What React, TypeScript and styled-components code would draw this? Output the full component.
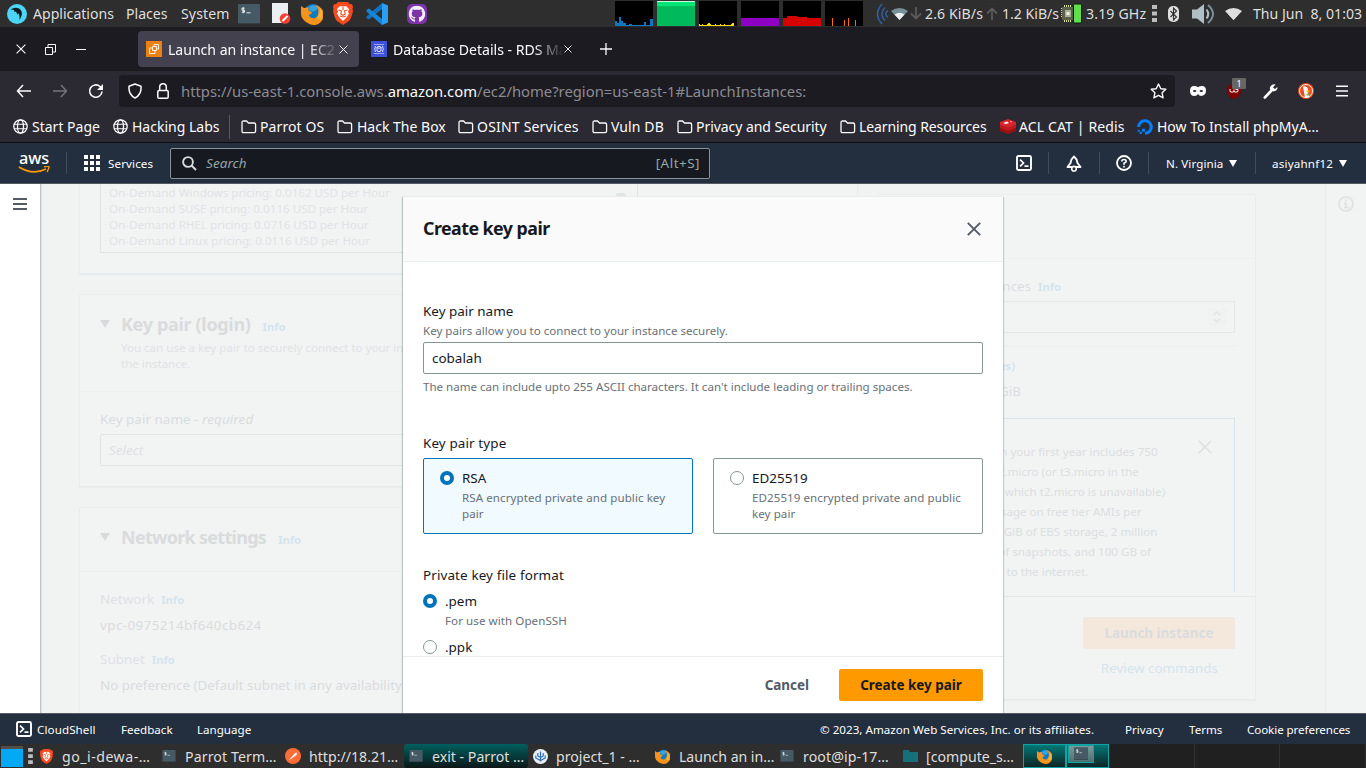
import React from 'react';
import styled, { createGlobalStyle, css } from 'styled-components';
import { FaGithub, FaDigitalOcean } from 'react-icons/fa6';

const Global = createGlobalStyle`
  * { box-sizing: border-box; }
  body { margin: 0; overflow: hidden; font-family: 'Noto Sans', 'Open Sans', sans-serif; }
  svg { display: block; flex: none; }
`;

const Screen = styled.div`
  width: 1366px;
  height: 768px;
  display: flex;
  flex-direction: column;
  overflow: hidden;
  background: #1c1b22;
`;

const Slot = styled.div<{ $w: number; $ls?: number }>`
  flex: none;
  width: ${(p) => p.$w}px;
  height: 100%;
  display: flex;
  align-items: center;
  white-space: pre;
  letter-spacing: ${(p) => p.$ls ?? 0}px;
`;

/* ---------- desktop panel ---------- */
const Panel = styled.div`
  flex: none;
  height: 27px;
  padding: 0 0 0 7px;
  display: flex;
  align-items: center;
  background: #2e2e2e;
  color: #dfdfdf;
  font-size: 14.1px;
  line-height: 27px;
`;
const Graph = styled.svg`
  width: 38px;
  height: 25px;
  background: #000;
`;

/* ---------- browser ---------- */
const TabStrip = styled.div`
  flex: none;
  height: 44px;
  padding: 0 0 0 16px;
  display: flex;
  align-items: center;
  background: #1c1b22;
  color: #fbfbfe;
  font-size: 14.1px;
`;
const Tab = styled.div<{ $active?: boolean; $w: number }>`
  flex: none;
  width: ${(p) => p.$w}px;
  height: 36px;
  padding-left: 8px;
  display: flex;
  align-items: center;
  gap: 6px;
  border-radius: 4px;
  background: ${(p) => (p.$active ? '#42414d' : 'transparent')};
`;
const TabTitle = styled.span<{ $w: number }>`
  width: ${(p) => p.$w}px;
  margin-right: -6px;
  overflow: hidden;
  white-space: nowrap;
  letter-spacing: -0.03px;
  mask-image: linear-gradient(to right, #000 calc(100% - 30px), transparent);
`;
const Toolbar = styled.div`
  flex: none;
  height: 40px;
  padding: 0 0 0 16px;
  display: flex;
  align-items: center;
  background: #2b2a33;
`;
const UrlBar = styled.div`
  flex: none;
  width: 1056px;
  height: 32px;
  padding-left: 9px;
  margin-right: 15px;
  display: flex;
  align-items: center;
  border-radius: 4px;
  background: #1c1b22;
  color: #8c8b93;
  font-size: 14.8px;
  b { font-weight: 400; color: #fbfbfe; }
`;
const Bookmarks = styled.div`
  flex: none;
  height: 32px;
  padding: 0 0 0 13px;
  display: flex;
  align-items: center;
  background: #2b2a33;
  border-bottom: 1px solid #0c0c0d;
  color: #fbfbfe;
  font-size: 14px;
`;
const BookmarkDivider = styled.i`
  width: 1px;
  height: 24px;
  background: #5b5b66;
`;
const Extension = styled.div`
  position: relative;
  display: flex;
`;
const Badge = styled.span`
  position: absolute;
  left: 5px;
  top: -6px;
  width: 14px;
  height: 11px;
  background: #666;
  border-radius: 1px;
  color: #fff;
  font-size: 9px;
  line-height: 11px;
  text-align: center;
`;

/* ---------- aws console ---------- */
const Nav = styled.header`
  flex: none;
  height: 41px;
  padding-left: 18px;
  display: flex;
  align-items: center;
  background: #232f3e;
  border-bottom: 1px solid #545b64;
  color: #fff;
  font-size: 11.6px;
`;
const NavDivider = styled.i`
  width: 1px;
  height: 22px;
  background: #414d5c;
`;
const Logo = styled.div`
  width: 32px;
  height: 26px;
  display: flex;
  flex-direction: column;
  align-items: center;
  font-size: 16.3px;
  font-weight: 500;
  line-height: 16px;
  letter-spacing: -0.2px;
`;
const SearchBox = styled.div`
  width: 540px;
  height: 31px;
  padding: 0 10px 0 11px;
  display: flex;
  align-items: center;
  gap: 9px;
  border: 1px solid #879596;
  border-radius: 2px;
  background: #161920;
  color: #95a5a6;
  font-size: 13.45px;
  em { flex: 1; letter-spacing: 0.1px; }
`;
const Shortcut = styled.span`
  margin-right: -1px;
  letter-spacing: 0.5px;
`;

const Page = styled.div`
  position: relative;
  flex: none;
  height: 529px;
  display: flex;
  overflow: hidden;
  background: #f1f3f3;
`;
const SideRail = styled.nav`
  flex: none;
  width: 41px;
  padding: 14px 0 0 13px;
  background: #fff;
  border-right: 1px solid #bcc3c6;
  box-shadow: 1px 0 1px #dfe3e4;
`;
const Content = styled.main`
  flex: none;
  width: 1284px;
  height: 529px;
  padding-left: 38px;
  display: flex;
  gap: 20px;
`;
const InfoRail = styled.aside`
  flex: 1;
  padding: 12px 0 0 12px;
  border-left: 1px solid #eaeded;
  background: #f2f4f4;
`;
const LeftColumn = styled.div`
  flex: none;
  width: 779px;
  display: flex;
  flex-direction: column;
  gap: 20px;
`;
const Card = styled.section<{ $h: number }>`
  flex: none;
  height: ${(p) => p.$h}px;
  background: #f2f4f4;
  border: 1px solid #eceeee;
  border-bottom-color: #e7eaea;
  box-shadow: 0 1px 1px #e9ecec;
`;
const PricingCard = styled(Card)`
  padding-left: 20px;
  border-top: 0;
`;
const Pricing = styled.div`
  width: 538px;
  height: 69px;
  display: flex;
  justify-content: space-between;
  padding: 1px 11px 0 8px;
  border: 1px solid #e1e4e5;
  border-top: 0;
  color: #e0e3e5;
  font-size: 11.62px;
  line-height: 16px;
  svg { margin-top: 8px; }
`;
const CardHead = styled.div<{ $h: number }>`
  height: ${(p) => p.$h}px;
  padding: 17px 20px 0;
  border-bottom: 1px solid #edf0f0;
`;
const CardTitle = styled.h2<{ $ls: number }>`
  margin: 0;
  display: flex;
  align-items: center;
  height: 24px;
  color: #d9dbdd;
  font-size: 18px;
  font-weight: 700;
  letter-spacing: ${(p) => p.$ls}px;
  svg { margin-right: 11px; }
`;
const InfoLink = styled.span<{ $ml?: number }>`
  margin-left: ${(p) => p.$ml ?? 7}px;
  color: #d4e4ee;
  font-size: 11.2px;
  font-weight: 700;
  line-height: 1;
  letter-spacing: 0;
`;
const TitleInfo = styled(InfoLink)`
  margin: 5px 0 0 12px;
`;
const CardNote = styled.p`
  margin: 4px 0 0 21px;
  color: #e0e3e5;
  font-size: 11.55px;
  line-height: 16px;
  white-space: pre;
`;
const CardBody = styled.div`
  padding: 17px 20px;
  color: #d9dcde;
  font-size: 13.49px;
  line-height: 20px;
  em { letter-spacing: 0.1px; }
`;
const FieldBox = styled.div`
  height: 32px;
  margin-top: 5px;
  padding: 5px 8px;
  border: 1px solid #e1e4e5;
  border-radius: 2px;
  color: #dfe2e3;
  font-style: italic;
`;
const Muted = styled.div`
  height: 20px;
  color: #dfe1e4;
  &:not(:first-child) { margin-top: 14px; }
`;
const Value = styled.div<{ $ls?: number }>`
  height: 20px;
  margin-top: 6px;
  font-size: 13.4px;
  letter-spacing: ${(p) => p.$ls ?? 0}px;
`;

const Summary = styled(Card)`
  width: 378px;
  margin-top: 10px;
  display: flex;
  flex-direction: column;
  color: #dbdee0;
  font-size: 13.4px;
  line-height: 20px;
`;
const SummaryHead = styled.div`
  height: 64px;
  border-bottom: 1px solid #edf0f0;
`;
const SummaryBody = styled.div`
  height: 338px;
  padding: 17px 20px 0 0;
  border-bottom: 1px solid #e6e9e9;
`;
const Clipped = styled.div<{ $w: number }>`
  width: ${(p) => p.$w}px;
  height: 20px;
  text-align: right;
  white-space: nowrap;
`;
const Stepper = styled.div`
  height: 32px;
  margin: 5px 0 13px 20px;
  padding-right: 8px;
  display: flex;
  align-items: center;
  justify-content: flex-end;
  border: 1px solid #e5e8e9;
`;
const StepperButtons = styled.div`
  padding: 2px 4px;
  background: #f0f2f2;
`;
const SummaryRow = styled(Clipped)`
  margin-top: 6px;
`;
const RowRule = styled.div`
  margin: 0 0 8px 20px;
  height: 1px;
  background: #eef0f0;
`;
const FreeTier = styled.div`
  margin: 17px 0 0 20px;
  height: 174px;
  padding: 23px 22px 0 45px;
  display: flex;
  justify-content: space-between;
  border: 1px solid #d7e4ec;
  border-bottom: 0;
  font-size: 11.6px;
  white-space: pre;
  svg { margin-top: -2px; }
`;
const SummaryFoot = styled.div`
  padding: 20px;
  display: flex;
  flex-direction: column;
  align-items: flex-end;
`;
const LaunchButton = styled.div`
  width: 152px;
  height: 32px;
  border-radius: 2px;
  background: #f3e8db;
  color: #dadcdf;
  font-weight: 700;
  line-height: 32px;
  text-align: center;
`;
const ReviewLink = styled.div`
  margin: 9px 17px 0 0;
  color: #d5e4ed;
`;

/* ---------- modal ---------- */
const Modal = styled.div`
  position: absolute;
  left: 403px;
  top: 12px;
  width: 600px;
  height: 517px;
  display: flex;
  flex-direction: column;
  background: #fff;
  border-top: 1px solid #eaeded;
  box-shadow: 0 1px 1px rgba(0, 28, 36, 0.2), 1px 1px 1px rgba(0, 28, 36, 0.15), -1px 1px 1px rgba(0, 28, 36, 0.2);
  color: #16191f;
  font-size: 13.45px;
  line-height: 20px;
`;
const ModalHead = styled.div`
  height: 65px;
  padding: 0 22px 1px 20px;
  display: flex;
  align-items: center;
  justify-content: space-between;
  background: #fafafa;
  border-bottom: 1px solid #eaeded;
`;
const ModalTitle = styled.h2`
  margin: -1px 0 0;
  font-size: 17.8px;
  font-weight: 700;
  letter-spacing: -0.52px;
`;
const ModalBody = styled.div`
  flex: 1;
  overflow: hidden;
  padding: 39px 20px 0;
`;
const Hint = styled.div`
  color: #687078;
  font-size: 11.57px;
  line-height: 16px;
`;
const NameHint = styled(Hint)`
  margin-top: 2px;
`;
const Input = styled.div`
  height: 32px;
  margin: 3px 0 5px;
  padding-left: 8px;
  border: 1px solid #879596;
  border-radius: 2px;
  line-height: 30px;
`;
const FieldLabel = styled.div<{ $mt: number }>`
  margin-top: ${(p) => p.$mt}px;
  letter-spacing: 0.12px;
`;
const Tiles = styled.div`
  margin-top: 5px;
  display: grid;
  grid-template-columns: 1fr 1fr;
  gap: 20px;
`;
const Tile = styled.div<{ $on?: boolean }>`
  height: 76px;
  padding: 9px 16px;
  display: flex;
  gap: 8px;
  border: 1px solid #879596;
  border-radius: 2px;
  ${(p) => p.$on && css`background: #f1faff; border-color: #0073bb;`}
`;
const TileHint = styled(Hint)`
  margin-top: 2px;
  letter-spacing: 0.07px;
`;
const Option = styled.div<{ $mt: number }>`
  margin-top: ${(p) => p.$mt}px;
  display: flex;
  gap: 8px;
`;
const Radio = styled.span<{ $on?: boolean }>`
  flex: none;
  width: 14px;
  height: 14px;
  margin-top: 3px;
  border-radius: 50%;
  background: #fff;
  border: ${(p) => (p.$on ? '4.5px solid #0073bb' : '1px solid #879596')};
`;
const ModalFoot = styled.div`
  height: 57px;
  padding: 0 20px;
  display: flex;
  align-items: center;
  justify-content: flex-end;
  gap: 30px;
  border-top: 1px solid #eaeded;
  font-weight: 700;
  color: #545b64;
`;
const Primary = styled.div`
  width: 144px;
  height: 32px;
  border-radius: 2px;
  background: #ff9900;
  color: #16191f;
  line-height: 32px;
  text-align: center;
`;

/* ---------- footer + taskbar ---------- */
const Footer = styled.footer`
  flex: none;
  height: 31px;
  padding-left: 16px;
  display: flex;
  align-items: center;
  background: #232f3e;
  border-top: 1px solid #545b64;
  color: #fff;
  font-size: 11.6px;
`;
const Taskbar = styled.div`
  flex: none;
  height: 24px;
  padding-left: 1px;
  display: flex;
  align-items: center;
  background: #2e2e2e;
  color: #dfdfdf;
  font-size: 14.15px;
`;
const ActiveTask = styled.div`
  flex: none;
  width: 124px;
  height: 24px;
  margin-right: 5px;
  padding-left: 5px;
  display: flex;
  align-items: center;
  border-radius: 3px;
  background: linear-gradient(#00605f, #0d1717);
  white-space: pre;
`;
const TrayTask = styled.div`
  flex: none;
  width: 43px;
  height: 24px;
  display: flex;
  align-items: center;
  justify-content: center;
  border: 1px solid #0fa3a3;
  background: linear-gradient(#007877, #102525);
`;
const TrayThumb = styled.div`
  width: 26px;
  height: 18px;
  margin: -5px 14px 0 0;
  display: flex;
  align-items: center;
  justify-content: center;
  border: 1px solid #0fa3a3;
  background: linear-gradient(#7a9a9a, #4d7070);
`;
const Workspace = styled.div<{ $w: number }>`
  width: ${(p) => p.$w}px;
  height: 24px;
  background: #202020;
  border-right: 1px solid #303030;
`;
const ShowDesktop = styled.div`
  width: 22px;
  height: 21px;
  border-top: 3px solid #50504f;
  background: #03a9f4;
`;

/* ---------- icons ---------- */
const Cross = ({ s = 10, c = '#fbfbfe', w = 1.1 }: { s?: number; c?: string; w?: number }) => (
  <svg width={s} height={s} viewBox="0 0 10 10" stroke={c} strokeWidth={w} fill="none"><path d="M.6.6l8.8 8.8M9.4.6L.6 9.4" /></svg>
);
const Terminal = ({ w = 22, h = 20 }: { w?: number; h?: number }) => (
  <svg width={w} height={h} viewBox="0 0 22 20">
    <rect width="22" height="20" rx="1" fill="#455a64" /><path d="M0 19h22v1H0z" fill="#323f45" />
    <path d="M6.6 4.2H4v2h2.5v2H3.8M5.2 3.2v6M8.5 8.8h4" stroke="#eee" strokeWidth="1" fill="none" />
  </svg>
);
const Folder = () => (
  <svg width="16" height="14" viewBox="0 0 16 14" fill="none" stroke="#fbfbfe" strokeWidth="1.3">
    <path d="M1 11V2.5Q1 1 2.500 1H5.500L7.500 3H13Q14.600 3 14.600 4.500V11Q14.600 12.600 13 12.600H2.500Q1 12.600 1 11z" />
  </svg>
);
const Globe = () => (
  <svg width="15" height="15" viewBox="0 0 15 15" fill="none" stroke="#fbfbfe" strokeWidth="1.3">
    <circle cx="7.500" cy="7.500" r="6.700" /><ellipse cx="7.500" cy="7.500" rx="3" ry="6.700" /><path d="M1 5.300h13M1 9.700h13" strokeWidth="1.100" />
  </svg>
);
const CloudShell = () => (
  <svg width="16" height="16" viewBox="0 0 16 16" fill="none" stroke="#fff" strokeWidth="1.900">
    <rect x="1" y="1" width="14" height="14" rx="1.500" /><path d="M4 4.600L7.500 8 4 11.400M8.500 11.200H12.500" strokeWidth="1.700" />
  </svg>
);
const Caret = ({ w = 8, h = 7, c = '#fff' }: { w?: number; h?: number; c?: string }) => (
  <svg width={w} height={h} viewBox="0 0 8 7" preserveAspectRatio="none"><path d="M0 0h8L4 7z" fill={c} /></svg>
);
const Firefox = ({ s }: { s: number }) => (
  <svg width={s} height={s} viewBox="0 0 22 22">
    <circle cx="12" cy="10" r="9" fill="#0c7cc4" />
    <path d="M8 4c2-2 6-2 8-1 1 2 0 4-2 5s-4 0-6-1z" fill="#36a3e0" />
    <path d="M0 3l3 2c1 0 4-1 5 0-1 1-1 2 0 3l3 1c0 2-2 2-3 3 0 2 3 4 6 3 3-1 4-5 3-9-1-2-2-3-3-4 5 1 9 5 9 10-1 6-5 10-10 10S0 17 0 11c0-3 0-5 0-8z" fill="#f6931d" />
    <path d="M19 5c3 3 3 8 1 12l-4-2c2-3 3-6 3-10z" fill="#fbb034" />
  </svg>
);
const Brave = ({ w, h }: { w: number; h: number }) => (
  <svg width={w} height={h} viewBox="0 0 20 23">
    <path d="M5 0h10l2 2.300 2-.3 1 3-.5 2 .5 2c-1 4-2 8-4 10l-6 4-6-4C2 17 1 13 0 9l.5-2L0 5l1-3 2 .3z" fill="#fb4a1e" />
    <path d="M10 4.500L7 4 4 7l1 3-1 1.500 2 3.500 4 4 4-4 2-3.500L15 10l1-3-3-3z" fill="#fff" />
    <path d="M5.500 8l3 .8-.7 3.200 2.200 1.300 2.200-1.300-.7-3.200 3-.8M7 14l3 1 3-1M10 5v3" stroke="#fb4a1e" strokeWidth="1.100" fill="none" />
  </svg>
);
const Wifi = ({ c, c2 }: { c: string; c2: string }) => (
  <svg width="17" height="12" viewBox="0 0 17 12"><path d="M0 3Q8.500-3 17 3L8.500 12z" fill={c2} /><path d="M3.500 6.500Q8.500 3 13.500 6.500L8.500 12z" fill={c} /></svg>
);
const Handle = ({ h = 18 }: { h?: number }) => (
  <svg width="5" height={h} viewBox="0 0 5 18" fill="#bdbdbd"><path d="M0 0h5v4H0zM0 6.500h5v4H0zM0 13h5v4H0z" /></svg>
);
const Arrow = ({ up }: { up?: boolean }) => (
  <svg width="12" height="13" viewBox="0 0 12 13" fill="none" stroke="#5a5a5a" strokeWidth="1.800">
    <path d={up ? 'M6 13V1.500M1 6.500l5-5 5 5' : 'M6 0v11.500M1 6.500l5 5 5-5'} />
  </svg>
);

export default function App() {
  return (
    <>
      <Global />
      <Screen>
        <Panel>
          <Slot $w={26}>
            <svg width="20" height="20" viewBox="0 0 20 20"><circle cx="10" cy="10" r="10" fill="#4dd5f7" /><path d="M3.500 5.500Q8 2.500 12 4.500 15.500 6.500 14.800 11L12.500 16.500Q13 11 11 9L10.500 11 9 7.500 7.500 8 7 6z" fill="#101b20" /></svg>
          </Slot>
          <Slot $w={93}>Applications</Slot>
          <Slot $w={55}>Places</Slot>
          <Slot $w={57} $ls={0.12}>System</Slot>
          <Slot $w={34}><Terminal /></Slot>
          <Slot $w={29}>
            <svg width="19" height="21" viewBox="0 0 19 21"><path d="M0 0h16v20H0z" fill="#eceff1" /><circle cx="13" cy="15.500" r="5.300" fill="#f44336" /><path d="M10.500 18l5-5" stroke="#fff" strokeWidth="2" /></svg>
          </Slot>
          <Slot $w={32}><Firefox s={22} /></Slot>
          <Slot $w={33}><Brave w={20} h={23} /></Slot>
          <Slot $w={41}>
            <svg width="22" height="22" viewBox="0 0 22 22"><path d="M16 0l6 2.500v17L16 22z" fill="#2a9df4" /><path d="M16 0v6L3 16.500.5 15v-1.500z" fill="#1173c0" /><path d="M16 22v-6L3 5.500.5 7v1.500z" fill="#1685d8" /></svg>
          </Slot>
          <Slot $w={208}>
            <svg width="20" height="20" viewBox="0 0 20 20"><rect width="20" height="20" rx="5" fill="#7b35a8" /><g transform="translate(1.5 1.5)"><FaGithub size={17} color="#f3eef7" /></g></svg>
          </Slot>
          <Slot $w={42}><Graph><path d="M0 25v-5h2v2h2V16h2v4h2v2h3v2h3v-1h3v1h12v-3h2v3h4v-6h3v7z" fill="#0b78c0" /></Graph></Slot>
          <Slot $w={42}><Graph><path d="M0 0h38v25H0z" fill="#00b95c" /><path d="M0 1h38v4H0z" fill="#00e676" /><path d="M0 0h38v1H0z" fill="#c9f7dd" /></Graph></Slot>
          <Slot $w={42}><Graph><path d="M0 25v-2h1v1h2v-1h1v1h4v-1h1v-1h2v1h1v1h4v-1h1v1h4v-1h1v1h3v-1h1v1h6v-1h1v-1h2v3z" fill="#fddb00" /></Graph></Slot>
          <Slot $w={42}><Graph><path d="M0 17h38v8H0z" fill="#8e00c4" /></Graph></Slot>
          <Slot $w={42}><Graph><path d="M0 17h4v-2h10v1h10v1h14v8H0z" fill="#d50000" /></Graph></Slot>
          <Slot $w={51}><Graph><path d="M7 17h1v8H7zM19 19h1v6h-1zM23 17h1v8h-1zM30 19h1v6h-1z" fill="#ff6d00" /></Graph></Slot>
          <Slot $w={15}>
            <svg width="13" height="22" viewBox="0 0 13 22" fill="none" stroke="#2f62a0" strokeWidth="1.500"><path d="M6 1Q-3 11 6 21M9 4.500Q2.500 11 9 17.500M12 7.500Q7.500 11 12 14.500" /></svg>
          </Slot>
          <Slot $w={19}><Wifi c="#eceff1" c2="#78909c" /></Slot>
          <Slot $w={15}><Arrow /></Slot>
          <Slot $w={61} $ls={0.1}>2.6 KiB/s</Slot>
          <Slot $w={16}><Arrow up /></Slot>
          <Slot $w={58}>1.2 KiB/s</Slot>
          <Slot $w={26}>
            <svg width="22" height="21" viewBox="0 0 22 21"><path d="M4.500 2v17M6.500 2v17M8.500 2v17M10.500 2v17M1 5.500h12M1 7.500h12M1 9.500h12M1 11.500h12M1 13.500h12" stroke="#e0dfa6" /><rect x="2" y="4" width="11" height="13" fill="#5b604a" /><rect x="5" y="7" width="6" height="7" fill="#a9ad99" /><rect x="6.500" y="9" width="3" height="3" fill="#eceee2" /><rect x="13.500" y="1" width="8" height="19" rx="1" fill="#5fe04b" stroke="#0b1a09" /></svg>
          </Slot>
          <Slot $w={66} $ls={0.15}>3.19 GHz</Slot>
          <Slot $w={16}><Handle /></Slot>
          <Slot $w={24}>
            <svg width="11" height="16" viewBox="0 0 11 16"><rect width="11" height="16" rx="5" fill="#dfdfdf" /><path d="M2.500 5l6 6-3 3V2l3 3-6 6" stroke="#2e2e2e" strokeWidth="1.100" fill="none" /></svg>
          </Slot>
          <Slot $w={33}>
            <svg width="23" height="20" viewBox="0 0 23 20"><path d="M0 5.500h5L12 0v20l-7-5.500H0z" fill="#b0bec5" /><path d="M14.500 5.500Q18 10 14.500 14.500" stroke="#b0bec5" strokeWidth="2" fill="none" /><path d="M16 1Q26 10 16 19" stroke="#78909c" strokeWidth="2" fill="none" /></svg>
          </Slot>
          <Slot $w={28}><Wifi c="#dfdfdf" c2="#dfdfdf" /></Slot>
          <Slot $w={112}>{'Thu Jun  8, 01:03'}</Slot>
        </Panel>

        <TabStrip>
          <Slot $w={29}><Cross /></Slot>
          <Slot $w={31}>
            <svg width="11" height="11" viewBox="0 0 11 11" fill="none" stroke="#fbfbfe"><path d="M.5 3.500h7v7h-7zM3 3V.5h7.500V8H8" /></svg>
          </Slot>
          <Slot $w={62}><svg width="10" height="1"><path d="M0 0h10v1H0z" fill="#fbfbfe" /></svg></Slot>
          <Tab $active $w={221}>
            <svg width="16" height="16" viewBox="0 0 16 16" fill="none" stroke="#fff"><path d="M0 0h16v16H0z" fill="#ec8011" stroke="none" /><path d="M3.500 7v5.500H9V10M3.500 7H6M6.500 5.500h4v4h-4zM8 5.500V3.500h4.500V8h-2" strokeWidth=".9" /></svg>
            <TabTitle $w={171}>Launch an instance | EC2 Management</TabTitle>
            <Cross s={9} />
          </Tab>
          <Slot $w={4} />
          <Tab $w={233}>
            <svg width="16" height="16" viewBox="0 0 16 16" fill="none" stroke="#fff"><path d="M0 0h16v16H0z" fill="#3f51d9" stroke="none" /><ellipse cx="8" cy="6.300" rx="2" ry=".9" strokeWidth=".8" /><path d="M6 6.300v3.700q2 1.300 4 0V6.300M4.500 5Q3 8 4.500 11M11.500 5Q13 8 11.500 11" strokeWidth=".8" /><path d="M3.500 3.500h9M3.500 12.500h9" strokeDasharray="1 1" /></svg>
            <TabTitle $w={171}>Database Details - RDS Management</TabTitle>
            <Cross s={8} />
          </Tab>
          <Slot $w={4} />
          <svg width="12" height="12" viewBox="0 0 12 12" stroke="#fbfbfe" strokeWidth="1.300"><path d="M6 0v12M0 6h12" /></svg>
        </TabStrip>

        <Toolbar>
          <Slot $w={36}><svg width="16" height="14" viewBox="0 0 16 14" fill="none" stroke="#fbfbfe" strokeWidth="1.500"><path d="M15 7H1.500M7 1L1.500 7 7 13" /></svg></Slot>
          <Slot $w={36}><svg width="16" height="14" viewBox="0 0 16 14" fill="none" stroke="#75747c" strokeWidth="1.500"><path d="M1 7h13.500M9 1l5.500 6L9 13" /></svg></Slot>
          <Slot $w={31}><svg width="16" height="16" viewBox="0 0 16 16" fill="none" stroke="#fbfbfe" strokeWidth="1.600"><path d="M14 8.500A6.200 6.200 0 1 1 12 3.500L14 5.500" /><path d="M15 1v6H9z" fill="#fbfbfe" stroke="none" /></svg></Slot>
          <UrlBar>
            <Slot $w={29}><svg width="14" height="16" viewBox="0 0 14 16" fill="none" stroke="#fbfbfe" strokeWidth="1.500"><path d="M7 1l6 2.300C13.500 9 11 13 7 15 3 13 .5 9 1 3.300z" strokeLinejoin="round" /></svg></Slot>
            <Slot $w={24}><svg width="12" height="16" viewBox="0 0 12 16" fill="none" stroke="#fbfbfe" strokeWidth="1.500"><rect x=".8" y="7.500" width="10.400" height="7.700" rx="1.200" /><path d="M2.700 7.500V4a3.300 3.300 0 0 1 6.600 0v3.500" /></svg></Slot>
            <Slot $w={969}>https://us-east-1.console.aws.<b>amazon.com</b>/ec2/home?region=us-east-1#LaunchInstances:</Slot>
            <svg width="17" height="16" viewBox="0 0 17 16" fill="none" stroke="#fbfbfe" strokeWidth="1.400" strokeLinejoin="round"><path d="M8.500 1l2.300 4.700 5 .6-3.700 3.500 1 5-4.600-2.500-4.600 2.500 1-5L1.200 6.300l5-.6z" /></svg>
          </UrlBar>
          <Slot $w={37}><svg width="16" height="10" viewBox="0 0 16 10"><path d="M4 0q2.500 0 4 1.300Q9.500 0 12 0q4 0 4 4.500T11.500 10Q9 10 8 8 7 10 4.500 10 0 10 0 5T4 0z" fill="#fbfbfe" /><ellipse cx="4.700" cy="5" rx="1.700" ry="1.100" fill="#2b2a33" /><ellipse cx="11.300" cy="5" rx="1.700" ry="1.100" fill="#2b2a33" /></svg></Slot>
          <Slot $w={36}>
            <Extension>
              <svg width="14" height="15" viewBox="0 0 14 15"><path d="M7 0l7 2v5q0 5-7 8Q0 12 0 7V2z" fill="#800000" /><path d="M3 5v2.500q2 1.500 4 0V5.500M7 7.500q2 1.500 4 0V5.500H8.500" stroke="#fff" fill="none" /></svg>
              <Badge>1</Badge>
            </Extension>
          </Slot>
          <Slot $w={35}><svg width="15" height="15" viewBox="0 0 15 15"><path d="M1.800 13.500L8 7" stroke="#fbfbfe" strokeWidth="2.600" strokeLinecap="round" /><path d="M11 .3A4.200 4.200 0 0 0 7 5.500 4.200 4.200 0 0 0 14.500 4.500L14.300 3 12 5 10 3.500 12.500.5z" fill="#fbfbfe" /></svg></Slot>
          <Slot $w={38}><svg width="16" height="16" viewBox="0 0 16 16"><circle cx="8" cy="8" r="8" fill="#ea4a1f" /><circle cx="8" cy="8" r="6.500" fill="none" stroke="#fff" strokeWidth=".9" /><path d="M5 3.500q4-1 5 2.500v3l1 5.300q-2 .7-4 .3z" fill="#fff" /><path d="M8.500 7.500h4l-2 1.700h-2z" fill="#fdb900" /><path d="M8.500 10.500h3v2h-3z" fill="#65bc46" /></svg></Slot>
          <svg width="12" height="12" viewBox="0 0 12 12" stroke="#fbfbfe" strokeWidth="1.400"><path d="M0 1.200h12M0 6h12M0 10.800h12" /></svg>
        </Toolbar>

        <Bookmarks>
          <Slot $w={19}><Globe /></Slot><Slot $w={81}>Start Page</Slot>
          <Slot $w={19}><Globe /></Slot><Slot $w={97}>Hacking Labs</Slot>
          <Slot $w={12}><BookmarkDivider /></Slot>
          <Slot $w={19}><Folder /></Slot><Slot $w={77} $ls={0.1}>Parrot OS</Slot>
          <Slot $w={20}><Folder /></Slot><Slot $w={101}>Hack The Box</Slot>
          <Slot $w={19}><Folder /></Slot><Slot $w={115} $ls={0.2}>OSINT Services</Slot>
          <Slot $w={19}><Folder /></Slot><Slot $w={66} $ls={0.1}>Vuln DB</Slot>
          <Slot $w={19}><Folder /></Slot><Slot $w={144} $ls={-0.05}>Privacy and Security</Slot>
          <Slot $w={19}><Folder /></Slot><Slot $w={141} $ls={-0.1}>Learning Resources</Slot>
          <Slot $w={19}><svg width="16" height="15" viewBox="0 0 16 15"><path d="M0 9l8 3 8-3v3l-8 3-8-3z" fill="#9a0f0f" /><path d="M0 6l8 3 8-3v3l-8 3-8-3z" fill="#c6161b" /><path d="M0 3l8-3 8 3v3L8 9 0 6z" fill="#d9222a" /><path d="M3 4l4-1.500L9 4 6 5zM10 2l2 .7-1 .8z" fill="#fff" /></svg></Slot>
          <Slot $w={118} $ls={0.13}>ACL CAT | Redis</Slot>
          <Slot $w={20}><FaDigitalOcean size={16} color="#0080ff" /></Slot>
          <Slot $w={162}>How To Install phpMyA…</Slot>
        </Bookmarks>

        <Nav>
          <Slot $w={48}>
            <Logo>aws<svg width="32" height="8" viewBox="0 0 32 8" fill="none" stroke="#ff9900"><path d="M.8 1Q15 9.500 28 3" strokeWidth="1.700" /><path d="M26 .8Q31-.2 31 .9T29 6" strokeWidth="1.400" /></svg></Logo>
          </Slot>
          <Slot $w={18}><NavDivider /></Slot>
          <Slot $w={24}><svg width="16" height="16" viewBox="0 0 16 16" fill="#fff"><path d="M0 0h4v4H0zM6 0h4v4H6zM12 0h4v4h-4zM0 6h4v4H0zM6 6h4v4H6zM12 6h4v4h-4zM0 12h4v4H0zM6 12h4v4H6zM12 12h4v4h-4z" /></svg></Slot>
          <Slot $w={62} $ls={0.12}>Services</Slot>
          <SearchBox>
            <svg width="15" height="15" viewBox="0 0 15 15" fill="none" stroke="#d5dbdb" strokeWidth="1.900"><circle cx="6" cy="6" r="4.900" /><path d="M9.500 9.500l4.500 4.500" /></svg>
            <em>Search</em><Shortcut>[Alt+S]</Shortcut>
          </SearchBox>
          <Slot $w={306} />
          <Slot $w={32}><CloudShell /></Slot>
          <Slot $w={18}><NavDivider /></Slot>
          <Slot $w={33}><svg width="16" height="17" viewBox="0 0 16 17" fill="none" stroke="#fff" strokeWidth="1.900"><path d="M8 1.500C6 3 5 5 4.500 8L1.500 12h13l-3-4C11 5 10 3 8 1.500z" strokeLinejoin="round" /><circle cx="8" cy="13.700" r="2.300" fill="#232f3e" strokeWidth="1.600" /></svg></Slot>
          <Slot $w={17}><NavDivider /></Slot>
          <Slot $w={32}><svg width="16" height="16" viewBox="0 0 16 16" fill="none" stroke="#fff" strokeWidth="1.800"><circle cx="8" cy="8" r="7" /><path d="M5.800 6.500Q5.800 4.500 8 4.500t2.200 1.700Q10.200 7.300 8 8.200v1.500M8 10.700v1.700" strokeWidth="1.600" /></svg></Slot>
          <Slot $w={18}><NavDivider /></Slot>
          <Slot $w={63} $ls={0.1}>N. Virginia</Slot>
          <Slot $w={26}><Caret /></Slot>
          <Slot $w={17}><NavDivider /></Slot>
          <Slot $w={67} $ls={0.2}>asiyahnf12</Slot>
          <Caret />
        </Nav>

        <Page>
          <SideRail>
            <svg width="14" height="13" viewBox="0 0 14 13" fill="#545b64"><path d="M0 0h14v2H0zM0 5h14v2H0zM0 10h14v2H0z" /></svg>
          </SideRail>
          <Content>
            <LeftColumn>
              <PricingCard $h={90}>
                <Pricing>
                  <div>
                    On-Demand Windows pricing: 0.0162 USD per Hour<br />
                    On-Demand SUSE pricing: 0.0116 USD per Hour<br />
                    On-Demand RHEL pricing: 0.0716 USD per Hour<br />
                    On-Demand Linux pricing: 0.0116 USD per Hour
                  </div>
                  <svg width="10" height="3"><rect width="10" height="6" rx="2" fill="#e1e4e4" /></svg>
                </Pricing>
              </PricingCard>
              <Card $h={193}>
                <CardHead $h={97}>
                  <CardTitle $ls={-0.33}><Caret w={10} h={8} c="#d8dadc" />Key pair (login)<TitleInfo>Info</TitleInfo></CardTitle>
                  <CardNote>{'You can use a key pair to securely connect to your instance. Ensure that you have access\nthe instance.'}</CardNote>
                </CardHead>
                <CardBody>
                  Key pair name - <em>required</em>
                  <FieldBox>Select</FieldBox>
                </CardBody>
              </Card>
              <Card $h={260}>
                <CardHead $h={64}>
                  <CardTitle $ls={-0.72}><Caret w={10} h={8} c="#d8dadc" />Network settings<TitleInfo>Info</TitleInfo></CardTitle>
                </CardHead>
                <CardBody>
                  <Muted>Network<InfoLink>Info</InfoLink></Muted>
                  <Value $ls={0.42}>vpc-0975214bf640cb624</Value>
                  <Muted>Subnet<InfoLink>Info</InfoLink></Muted>
                  <Value>No preference (Default subnet in any availability zone)</Value>
                </CardBody>
              </Card>
            </LeftColumn>
            <Summary $h={506}>
              <SummaryHead />
              <SummaryBody>
                <Clipped $w={182}>Number of instances<InfoLink>Info</InfoLink></Clipped>
                <Stepper>
                  <StepperButtons><svg width="10" height="14" viewBox="0 0 10 14" fill="none" stroke="#e2e5e6" strokeWidth="1.700"><path d="M2 5l3-3 3 3M2 9l3 3 3-3" /></svg></StepperButtons>
                </Stepper>
                <RowRule />
                <Clipped $w={136}><InfoLink>Storage (volumes)</InfoLink></Clipped>
                <SummaryRow $w={142}>1 volume(s) - 8 GiB</SummaryRow>
                <FreeTier>
                  <div>{'Free tier: In your first year includes 750\nhours of t2.micro (or t3.micro in the\nRegions in which t2.micro is unavailable)\ninstance usage on free tier AMIs per\nmonth, 30 GiB of EBS storage, 2 million\nIOs, 1 GB of snapshots, and 100 GB of\nbandwidth to the internet.'}</div>
                  <Cross s={14} c="#dfe2e3" w={1.2} />
                </FreeTier>
              </SummaryBody>
              <SummaryFoot>
                <LaunchButton>Launch instance</LaunchButton>
                <ReviewLink>Review commands</ReviewLink>
              </SummaryFoot>
            </Summary>
          </Content>
          <InfoRail>
            <svg width="16" height="16" viewBox="0 0 16 16" fill="none" stroke="#e1e4e4" strokeWidth="2"><circle cx="8" cy="8" r="7" /><path d="M8 3.500v2M6 7.500h2v4M6 11.500h4.500" strokeWidth="1.800" /></svg>
          </InfoRail>

          <Modal>
            <ModalHead><ModalTitle>Create key pair</ModalTitle><Cross s={14} c="#545b64" w={1.4} /></ModalHead>
            <ModalBody>
              <div>Key pair name</div>
              <NameHint>Key pairs allow you to connect to your instance securely.</NameHint>
              <Input>cobalah</Input>
              <Hint>The name can include upto 255 ASCII characters. It can't include leading or trailing spaces.</Hint>
              <FieldLabel $mt={38}>Key pair type</FieldLabel>
              <Tiles>
                <Tile $on>
                  <Radio $on />
                  <div>RSA<TileHint>RSA encrypted private and public key<br />pair</TileHint></div>
                </Tile>
                <Tile>
                  <Radio />
                  <div>ED25519<TileHint>ED25519 encrypted private and public<br />key pair</TileHint></div>
                </Tile>
              </Tiles>
              <FieldLabel $mt={31}>Private key file format</FieldLabel>
              <Option $mt={6}><Radio $on /><div>.pem<TileHint>For use with OpenSSH</TileHint></div></Option>
              <Option $mt={8}><Radio /><div>.ppk</div></Option>
            </ModalBody>
            <ModalFoot><span>Cancel</span><Primary>Create key pair</Primary></ModalFoot>
          </Modal>
        </Page>

        <Footer>
          <Slot $w={21}><CloudShell /></Slot>
          <Slot $w={84} $ls={0.1}>CloudShell</Slot>
          <Slot $w={76}>Feedback</Slot>
          <Slot $w={623}>Language</Slot>
          <Slot $w={305} $ls={0.02}>© 2023, Amazon Web Services, Inc. or its affiliates.</Slot>
          <Slot $w={64}>Privacy</Slot>
          <Slot $w={58}>Terms</Slot>
          <Slot $w={104} $ls={-0.08}>Cookie preferences</Slot>
        </Footer>

        <Taskbar>
          <Slot $w={27}><ShowDesktop /></Slot>
          <Slot $w={12}><Handle h={17} /></Slot>
          <Slot $w={22}><Brave w={13} h={15} /></Slot>
          <Slot $w={100} $ls={0.5}>go_i-dewa-…</Slot>
          <Slot $w={23}><Terminal w={14} h={12} /></Slot>
          <Slot $w={100} $ls={0.1}>Parrot Term…</Slot>
          <Slot $w={24}><svg width="16" height="16" viewBox="0 0 16 16"><circle cx="8" cy="8" r="8" fill="#ff6c37" /><path d="M4 12l6-7 2-.5L11.500 7 6 11z" fill="#fff" /></svg></Slot>
          <Slot $w={95}>http://18.21…</Slot>
          <ActiveTask><Slot $w={23}><Terminal w={14} h={12} /></Slot>exit - Parrot …</ActiveTask>
          <Slot $w={23}><svg width="15" height="15" viewBox="0 0 15 15"><circle cx="7.500" cy="7.500" r="7.500" fill="#e8eef4" /><path d="M7.500 2.500v10M4.800 4v3l2.700 1.500M10.200 4v3L7.500 8.500M2.800 6.500v2.500l4.700 2.500 4.700-2.500V6.500" stroke="#2c6fc0" strokeWidth="1.200" fill="none" /></svg></Slot>
          <Slot $w={99}>project_1 - …</Slot>
          <Slot $w={24}><Firefox s={15} /></Slot>
          <Slot $w={101} $ls={-0.05}>Launch an in…</Slot>
          <Slot $w={23}><Terminal w={14} h={12} /></Slot>
          <Slot $w={100} $ls={0.1}>root@ip-17…</Slot>
          <Slot $w={23}><svg width="15" height="12" viewBox="0 0 15 12"><path d="M0 0h6l1 2h8v10H0z" fill="#16707c" /></svg></Slot>
          <Slot $w={97}>[compute_s…</Slot>
          <TrayTask><Firefox s={15} /></TrayTask>
          <TrayTask><TrayThumb><Terminal w={14} h={13} /></TrayThumb></TrayTask>
          <Workspace $w={86} /><Workspace $w={86} /><Workspace $w={86} />
        </Taskbar>
      </Screen>
    </>
  );
}
